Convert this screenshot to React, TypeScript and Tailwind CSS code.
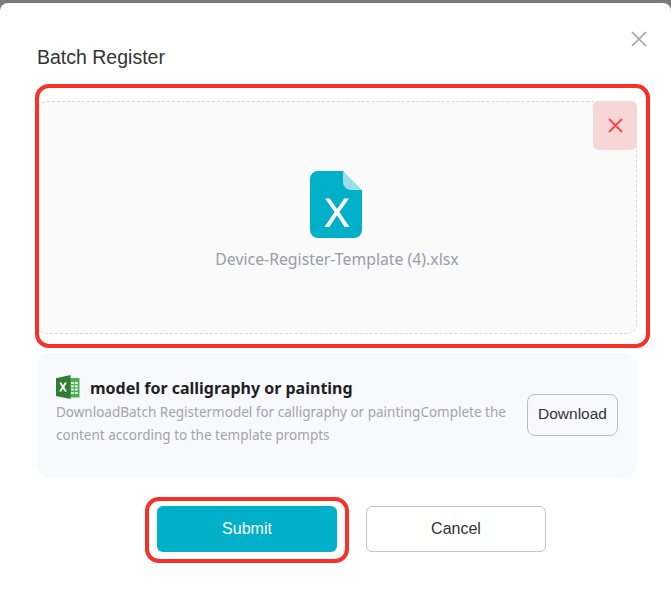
import React from "react";

const ExcelIcon = () => (
  <svg width="24" height="24" viewBox="0 0 24 24">
    <path d="M14 3h9.500v19.500H14z" fill="#4caf50" />
    <path d="M15 7h2.800v2H15zM15 10.300h2.800v2H15zM15 13.600h2.800v2H15zM15 16.900h2.800v2H15zM18.800 7h3v2h-3zM18.800 10.300h3v2h-3zM18.800 13.600h3v2h-3zM18.800 16.900h3v2h-3z" fill="#e8f5e9" />
    <path d="M0 3.200 14.500 0v24L0 21z" fill="#2e7d32" />
    <path d="M3.300 7.600h2.300l1.500 2.900 1.600-2.900h2.200L8.300 12l2.700 4.500H8.700l-1.700-3-1.700 3H3.100L5.800 12z" fill="#fff" />
  </svg>
);

const FileIcon = () => (
  <svg width="52" height="67" viewBox="0 0 52 67" className="-ml-[2px]">
    <path d="M8 0h26v10a9 9 0 0 0 9 9h9v40a8 8 0 0 1-8 8H8a8 8 0 0 1-8-8V8a8 8 0 0 1 8-8z" fill="#00afc8" />
    <path d="M33 0 52 19H41a8 8 0 0 1-8-8z" fill="#99dfe9" />
    <path d="M15 27.500h4.800L27 38l7.200-10.500H39L29.400 41 39.500 56h-4.900L27 44.300 19.400 56h-4.900l10.100-15z" fill="#fff" />
  </svg>
);

const App = () => {
  return (
    <div className="h-[591px] w-[671px] overflow-hidden bg-[#7a7a7a] pt-[3px] font-['Liberation_Sans',sans-serif]">
      <section className="relative h-[588px] rounded-t-[8px] bg-white pl-[37px] pr-[34px]">
        <div className="flex h-[81px] items-end pb-[14px]">
          <h2 className="text-[19.5px] leading-[26px] text-[#333333]">Batch Register</h2>
        </div>
        <button className="absolute right-[24px] top-[28px] text-[#a3a3a3]">
          <svg width="16" height="16" viewBox="0 0 16 16" fill="none" stroke="currentColor" strokeWidth="1.700">
            <path d="M1 1l14 14M15 1 1 15" />
          </svg>
        </button>

        <div className="relative mt-[17px] flex h-[233px] flex-col items-center rounded-[10px] border border-dashed border-[#d9d9d9] bg-[#fafafa] pt-[69px]">
          <FileIcon />
          <p className="mt-[9px] font-['Noto_Sans',sans-serif] text-[15.800px] leading-[24px] text-[#9b9ba8]">
            Device-Register-Template (4).xlsx
          </p>
          <button className="absolute right-[-1px] top-[-1px] flex h-[49px] w-[44px] items-center justify-center rounded-[6px] bg-[#f9d6d6] text-[#f9474c]">
            <svg width="15" height="15" viewBox="0 0 15 15" fill="none" stroke="currentColor" strokeWidth="1.800">
              <path d="M1 1l13 13M14 1 1 14" />
            </svg>
          </button>
        </div>
        {/* annotation boxes */}
        <div className="absolute left-[35px] top-[81px] h-[264px] w-[615px] rounded-[14px] border-4 border-[#f8302a]" />

        <div className="mt-[19px] flex h-[124px] items-center rounded-[12px] bg-[#f8f9fd] pl-[19px] pr-[19px]">
          <div className="w-[455px] self-start pt-[21px] font-['Noto_Sans',sans-serif]">
            <div className="flex items-center gap-[10px]">
              <ExcelIcon />
              <h3 className="pt-[3px] text-[16px] font-bold leading-[22px] text-[#1f1f24]">
                model for calligraphy or painting
              </h3>
            </div>
            <p className="mt-[2px] text-[13.500px] leading-[23px] text-[#a3a3af]">
              DownloadBatch Registermodel for calligraphy or paintingComplete the content according to the template prompts
            </p>
          </div>
          <button className="ml-auto h-[42px] w-[91px] rounded-[8px] border border-[#bcbcc2] pb-[2px] text-[15.500px] text-[#333333]">
            Download
          </button>
        </div>

        <div className="mt-[29px] flex gap-[29px] pl-[120px]">
          <button className="h-[46px] w-[180px] rounded-[6px] bg-[#00afc8] text-[16px] text-white">Submit</button>
          <button className="h-[46px] w-[180px] rounded-[6px] border border-[#c4c4c4] bg-white text-[16px] text-[#333333]">
            Cancel
          </button>
        </div>
        <div className="absolute left-[145px] top-[494px] h-[66px] w-[204px] rounded-[14px] border-4 border-[#f8302a]" />
      </section>
    </div>
  );
};

export default App;
